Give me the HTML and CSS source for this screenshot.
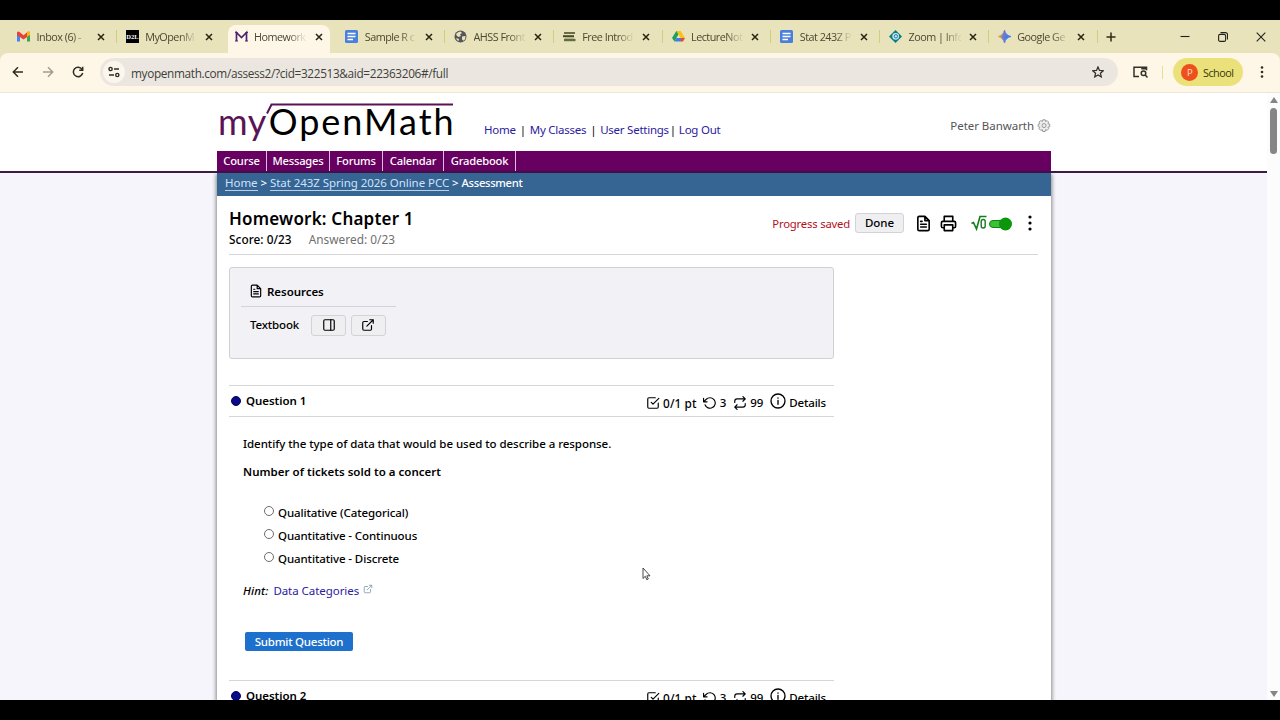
FILE: index.html
```html
<!DOCTYPE html>
<html lang="en">

<head>
    <meta charset="UTF-8">
    <meta name="viewport" content="width=device-width, initial-scale=1.0">
    <title>Homework: Chapter 1</title>
    <link rel="stylesheet" href="styles.css">
</head>

<body>
    <!-- shared icons -->
    <svg class="sprite">
        <symbol id="close" viewBox="0 0 8 8"><path d="M1 1l6 6M7 1L1 7" stroke="currentColor" stroke-width="1.5" fill="none"/></symbol>
        <symbol id="docs" viewBox="0 0 13 13"><rect width="13" height="13" rx="1.5" fill="#4a80dc"/><path d="M2.5 3.5h8M2.5 6.5h8M2.5 9.5h5.5" stroke="#fff" stroke-width="1.4"/></symbol>
        <symbol id="file" viewBox="0 0 24 24"><path d="M14 2H6a2 2 0 0 0-2 2v16a2 2 0 0 0 2 2h12a2 2 0 0 0 2-2V8zM14 2v6h6M16 13H8M16 17H8M10 9H8"/></symbol>
        <symbol id="check" viewBox="0 0 24 24"><path d="M9 11l3 3L22 4M21 12v7a2 2 0 0 1-2 2H5a2 2 0 0 1-2-2V5a2 2 0 0 1 2-2h11"/></symbol>
        <symbol id="undo" viewBox="0 0 24 24"><path d="M1 4v6h6M3.5 15a9 9 0 1 0 2.1-9.4L1 10"/></symbol>
        <symbol id="repeat" viewBox="0 0 24 24"><path d="M17 1l4 4-4 4M3 11V9a4 4 0 0 1 4-4h14M7 23l-4-4 4-4M21 13v2a4 4 0 0 1-4 4H3"/></symbol>
        <symbol id="info" viewBox="0 0 24 24"><circle cx="12" cy="12" r="10.5"/><path d="M12 17v-6M12 7.2v.6"/></symbol>
        <symbol id="external" viewBox="0 0 24 24"><path d="M18 13v6a2 2 0 0 1-2 2H5a2 2 0 0 1-2-2V8a2 2 0 0 1 2-2h6M15 3h6v6M10 14L21 3"/></symbol>
    </svg>

    <div class="browser">
        <div class="tabs">
            <div class="tab">
                <svg class="favicon" viewBox="0 0 13 13"><path d="M0 2.5v9h3V6z" fill="#4285f4"/><path d="M10 6v5.500h3v-9z" fill="#34a853"/><path d="M0 2.500Q1 .8 2.500 2l4 3.200 4-3.200Q12 .8 13 2.500V5L6.500 9.500 0 5z" fill="#e5433a"/><path d="M10 2.300Q12.500.5 13 2.500V5l-3 2z" fill="#f5b90e"/></svg>
                <span>Inbox (6) -</span><svg class="x"><use href="#close"/></svg>
            </div>
            <div class="tab no-line">
                <svg class="favicon" viewBox="0 0 13 13"><rect width="13" height="13" fill="#000"/><text class="d2l" x="0.3" y="9">D2L</text></svg>
                <span>MyOpenM</span><svg class="x"><use href="#close"/></svg>
            </div>
            <div class="tab active">
                <svg class="favicon" viewBox="0 0 13 13"><path d="M1.500 11V2.500l5 5 5-5V11" fill="none" stroke="#4b2470" stroke-width="1.700"/><path d="M0 11h3M10 11h3M0 2.500h2.500M10.500 2.500H13" stroke="#4b2470" stroke-width="1.200"/></svg>
                <span>Homework</span><svg class="x"><use href="#close"/></svg>
            </div>
            <div class="tab">
                <svg class="favicon"><use href="#docs"/></svg>
                <span>Sample R c</span><svg class="x"><use href="#close"/></svg>
            </div>
            <div class="tab">
                <svg class="favicon" viewBox="0 0 13 13"><circle cx="6.500" cy="6.500" r="6" fill="#54565b"/><path d="M2 4q2-2.500 4.500-2.500L8 3 6 4.500 7 6 4.500 7 3 6zM8 6.500l3.500-.5q.5 3-2 4.700L8 9.500zM2 8l3 1-.5 2.200Q2.500 10 2 8z" fill="#e8e3bb"/></svg>
                <span>AHSS Front</span><svg class="x"><use href="#close"/></svg>
            </div>
            <div class="tab">
                <svg class="favicon" viewBox="0 0 13 13"><path d="M1 3h11" stroke="#6b6b45" stroke-width="2"/><path d="M0 6.200h11" stroke="#3d4d2a" stroke-width="2"/><path d="M2 8h9" stroke="#d8a16a" stroke-width="1"/><path d="M1 10h11.500" stroke="#5c7048" stroke-width="2.400"/></svg>
                <span>Free Introd</span><svg class="x"><use href="#close"/></svg>
            </div>
            <div class="tab">
                <svg class="favicon" viewBox="0 0 13 13"><path d="M4.300 1h4.200L4.700 7.500 2.500 11.500 0 8z" fill="#20a15a"/><path d="M4.300 1h4.400L13 8H8.700z" fill="#fbc116"/><path d="M4.500 8h6L8.500 11.500h-6z" fill="#3f7ee8"/><path d="M9 8h4l-2 3.500H8.500z" fill="#e04e35"/></svg>
                <span>LectureNot</span><svg class="x"><use href="#close"/></svg>
            </div>
            <div class="tab">
                <svg class="favicon"><use href="#docs"/></svg>
                <span>Stat 243Z P</span><svg class="x"><use href="#close"/></svg>
            </div>
            <div class="tab">
                <svg class="favicon" viewBox="0 0 13 13"><path d="M6.500 0L13 6.500 6.500 13 0 6.500z" fill="#087d82"/><circle cx="6.700" cy="6.300" r="3.400" fill="#c7e2ee"/><circle cx="6.900" cy="6.300" r="1.700" fill="none" stroke="#237eb0"/></svg>
                <span>Zoom | Info</span><svg class="x"><use href="#close"/></svg>
            </div>
            <div class="tab">
                <svg class="favicon" viewBox="0 0 13 13"><defs><linearGradient id="gem" x1="0" x2="1" y1=".4" y2=".6"><stop offset=".05" stop-color="#e9b52b"/><stop offset=".4" stop-color="#7a79c5"/><stop offset=".7" stop-color="#3b7df0"/></linearGradient></defs><path d="M6.500 0Q7.500 5.500 13 6.500 7.500 7.500 6.500 13 5.500 7.500 0 6.500 5.500 5.500 6.500 0z" fill="url(#gem)" stroke="url(#gem)"/></svg>
                <span>Google Ge</span><svg class="x"><use href="#close"/></svg>
            </div>
            <svg class="new-tab" viewBox="0 0 10 10"><path d="M5 .5v9M.5 5h9" stroke="#2c2b16" stroke-width="1.500"/></svg>
            <div class="window-btns">
                <svg viewBox="0 0 10 10"><path d="M.5 4.500h9" stroke="#222"/></svg>
                <svg viewBox="0 0 10 10"><rect x=".6" y="2.400" width="7" height="7" rx="1.500"/><path d="M2.500 .6H7.500a2 2 0 0 1 2 2V7.500"/></svg>
                <svg viewBox="0 0 10 10"><path d="M.7.7l8.600 8.600M9.300.7L.7 9.300"/></svg>
            </div>
        </div>

        <div class="toolbar">
            <div class="nav-btns">
                <svg viewBox="0 0 12 12"><path d="M11 6H1.500M6 1.300L1.300 6 6 10.700"/></svg>
                <svg class="disabled" viewBox="0 0 12 12"><path d="M1 6h9.500M6 1.300L10.700 6 6 10.700"/></svg>
                <svg viewBox="0 0 12 12"><path d="M10 3.300A4.700 4.700 0 1 0 10.700 7M10.700 .8V4.300H7.200"/></svg>
            </div>
            <div class="address">
                <div class="site-info"><svg viewBox="0 0 12 12"><circle cx="2.600" cy="3" r="1.600"/><path d="M6 3h5M1 9h5"/><circle cx="9.300" cy="9" r="1.600"/></svg></div>
                <span>myopenmath.com/assess2/?cid=322513&amp;aid=22363206#/full</span>
                <svg class="star" viewBox="0 0 12 12"><path d="M6 .9l1.500 3.500 3.800.3-2.900 2.500.9 3.700L6 8.900l-3.300 2 .9-3.700L.7 4.700l3.800-.3z"/></svg>
            </div>
            <svg class="lens" viewBox="0 0 15 12"><path d="M6 10.500H1V1.200h12.500v3M9 1.200v1.500h4.500" /><circle cx="10.500" cy="7.300" r="2.300"/><path d="M12.200 9l2.300 2.500"/></svg>
            <div class="bar-line"></div>
            <div class="profile"><b>P</b><span>School</span></div>
            <svg class="kebab" viewBox="0 0 4 14"><circle cx="2" cy="2.500" r="1.300"/><circle cx="2" cy="7" r="1.300"/><circle cx="2" cy="11.500" r="1.300"/></svg>
        </div>

        <div class="viewport">
            <div class="page">
                <div class="header-wrap">
                    <div class="header">
                        <div class="logo">
                            <span class="my">my</span><span class="open">OpenMath</span>
                            <svg viewBox="0 0 188 12"><path d="M1 10.500L5.500 1.500H187" fill="none" stroke="#5b1358" stroke-width="2"/></svg>
                        </div>
                        <div class="links"><a>Home</a><i>|</i><a>My Classes</a><i>|</i><a>User Settings</a><i class="tight">|</i><a>Log Out</a></div>
                        <div class="user">Peter Banwarth
                            <svg viewBox="0 0 14 14"><path d="M5.800.8h2.400l.4 1.700 1.500-.9 1.600 1.600-.8 1.500 1.900.5v2.500l-1.900.4.8 1.600L10 11.400l-1.500-.8-.4 1.900H5.700l-.4-1.900-1.600.8L2 9.700l.9-1.500L1.200 7.700V5.200l1.700-.4L2 3.200l1.700-1.600 1.600.9z"/><circle cx="7" cy="6.600" r="2"/></svg>
                        </div>
                    </div>
                    <div class="menu"><a>Course</a><a>Messages</a><a>Forums</a><a>Calendar</a><a>Gradebook</a></div>
                </div>

                <div class="content">
                    <div class="breadcrumb"><a class="home">Home</a> &gt; <a class="course">Stat 243Z Spring 2026 Online PCC</a> &gt; <span>Assessment</span></div>
                    <div class="assess-header">
                        <div class="title">
                            <h1>Homework: Chapter 1</h1>
                            <div class="scores"><span class="score">Score: 0/23</span><span class="answered">Answered: 0/23</span></div>
                        </div>
                        <div class="tools">
                            <span class="saved">Progress saved</span>
                            <button class="done">Done</button>
                            <svg class="icon file"><use href="#file"/></svg>
                            <svg class="icon print" viewBox="0 0 24 24"><path d="M6 9V2h12v7M6 18H4a2 2 0 0 1-2-2v-5a2 2 0 0 1 2-2h16a2 2 0 0 1 2 2v5a2 2 0 0 1-2 2h-2M6 14h12v8H6z"/></svg>
                            <svg class="math" viewBox="0 0 42 16"><path d="M.5 8.500l2-1L5.500 14 9 1.500h6.500" fill="none" stroke="#147a1e" stroke-width="1.600"/><rect x="10.200" y="4.500" width="4" height="8.500" rx="2" fill="none" stroke="#147a1e" stroke-width="1.400"/><rect x="18.500" y="5.500" width="16" height="7" rx="3.500" fill="#35c435" stroke="#168016"/><circle cx="34.500" cy="9" r="6.500" fill="#0a970a"/></svg>
                            <svg class="more" viewBox="0 0 4 16"><circle cx="2" cy="2" r="1.600"/><circle cx="2" cy="8" r="1.600"/><circle cx="2" cy="14" r="1.600"/></svg>
                        </div>
                    </div>

                    <div class="resources">
                        <h2><svg class="icon"><use href="#file"/></svg>Resources</h2>
                        <div class="textbook">
                            <span>Textbook</span>
                            <button><svg class="icon" viewBox="0 0 24 24"><rect x="3" y="3" width="18" height="18" rx="2"/><path d="M15 3v18"/></svg></button>
                            <button><svg class="icon"><use href="#external"/></svg></button>
                        </div>
                    </div>

                    <div class="question-head">
                        <span class="dot"></span><span class="q-name">Question 1</span>
                        <div class="q-info">
                            <svg class="icon"><use href="#check"/></svg><span class="pts">0/1 pt</span>
                            <svg class="icon"><use href="#undo"/></svg><span class="tries">3</span>
                            <svg class="icon"><use href="#repeat"/></svg><span class="regens">99</span>
                            <svg class="icon info"><use href="#info"/></svg><span class="details">Details</span>
                        </div>
                    </div>
                    <div class="question">
                        <p class="prompt">Identify the type of data that would be used to describe a response.</p>
                        <p class="subject">Number of tickets sold to a concert</p>
                        <ul>
                            <li><input type="radio" name="q1"><label>Qualitative (Categorical)</label></li>
                            <li><input type="radio" name="q1"><label>Quantitative - Continuous</label></li>
                            <li><input type="radio" name="q1"><label>Quantitative - Discrete</label></li>
                        </ul>
                        <p class="hint"><em>Hint:</em><a>Data Categories</a><svg class="icon"><use href="#external"/></svg></p>
                        <button class="submit">Submit Question</button>
                    </div>
                    <div class="question-head">
                        <span class="dot"></span><span class="q-name">Question 2</span>
                        <div class="q-info">
                            <svg class="icon"><use href="#check"/></svg><span class="pts">0/1 pt</span>
                            <svg class="icon"><use href="#undo"/></svg><span class="tries">3</span>
                            <svg class="icon"><use href="#repeat"/></svg><span class="regens">99</span>
                            <svg class="icon info"><use href="#info"/></svg><span class="details">Details</span>
                        </div>
                    </div>
                </div>
            </div>
            <div class="scrollbar">
                <div class="arrow up"></div>
                <div class="thumb"></div>
                <div class="arrow down"></div>
            </div>
        </div>

        <svg class="cursor" viewBox="0 0 9 14"><path d="M1 1v10.500l2.300-2.200 1.500 3.400 1.500-.7-1.500-3.200H8z" fill="#fff" stroke="#333" stroke-width=".9"/></svg>
    </div>
</body>

</html>
```
FILE: styles.css
```css
* {
    box-sizing: border-box;
}

body {
    margin: 0;
    padding: 20px 0;
    height: 720px;
    background: #000;
    overflow: hidden;
    font-family: "Noto Sans", "Open Sans", sans-serif;
    font-size: 11.5px;
    letter-spacing: -0.05px;
    color: #000;
}

svg {
    display: block;
    flex: none;
}

.sprite {
    display: none;
}

.browser {
    height: 680px;
    overflow: hidden;
    background: #e8e3bb;
    display: flex;
    flex-direction: column;
    position: relative;
}

/* ---- tab strip ---- */
.tabs {
    height: 33px;
    padding-left: 8px;
    display: flex;
    align-items: center;
    flex: none;
}

.tab {
    width: 108.75px;
    height: 33px;
    padding: 0 12px 0 9px;
    display: flex;
    align-items: center;
    position: relative;
    font-family: "Open Sans", sans-serif;
    font-size: 10.8px;
    letter-spacing: -0.5px;
    color: #4a4933;
}

.tab::after {
    content: "";
    position: absolute;
    right: 0;
    top: 10px;
    width: 1px;
    height: 13px;
    background: #cfd07e;
}

.tab.no-line::after,
.tab.active::after {
    display: none;
}

.tab span {
    width: 52px;
    flex: none;
    margin-left: 6.5px;
    margin-right: 14px;
    white-space: nowrap;
    -webkit-mask-image: linear-gradient(90deg, #000 68%, rgba(0, 0, 0, 0.15) 94%);
    mask-image: linear-gradient(90deg, #000 68%, rgba(0, 0, 0, 0.15) 94%);
}

.tab.active {
    height: 28px;
    margin: 5px 6.75px 0 2px;
    padding: 0 0 5px 7px;
    width: 102px;
    background: #fef6e7;
    border-radius: 8px 8px 0 0;
}

.favicon {
    width: 13px;
    height: 13px;
}

.d2l {
    font: bold 6.500px "Liberation Serif", serif;
    letter-spacing: 0;
    fill: #fff;
}

.x {
    width: 8px;
    height: 8px;
    margin-left: -6px;
    color: #26250f;
}

.tab.active .x {
    margin-left: -5px;
}

.new-tab {
    width: 10px;
    height: 10px;
    margin-left: 8px;
}

.window-btns {
    margin-left: auto;
    padding-right: 14px;
    display: flex;
    gap: 28px;
}

.window-btns svg {
    width: 10px;
    height: 10px;
    fill: none;
    stroke: #222;
    stroke-width: 1.1;
}

/* ---- toolbar ---- */
.toolbar {
    height: 40px;
    flex: none;
    padding: 0 16px 1px 12px;
    border-bottom: 1px solid #ece6da;
    border-radius: 8px 8px 0 0;
    background: #fef6e7;
    display: flex;
    align-items: center;
}

.nav-btns {
    display: flex;
    gap: 18px;
}

.nav-btns svg {
    width: 12px;
    height: 12px;
    fill: none;
    stroke: #2f2e22;
    stroke-width: 1.5;
}

.nav-btns svg.disabled {
    stroke: #a19d90;
}

.address {
    width: 1018px;
    height: 28px;
    margin-left: 16px;
    padding: 0 14px 0 3px;
    border-radius: 14px;
    background: #ebe7e0;
    display: flex;
    align-items: center;
    font-family: "Open Sans", sans-serif;
    font-size: 11.8px;
    letter-spacing: -0.34px;
    color: #403f3a;
}

.address span {
    padding-top: 1px;
}

.site-info {
    width: 22px;
    height: 22px;
    border-radius: 50%;
    background: #fbf6ed;
    display: flex;
    align-items: center;
    justify-content: center;
    margin-right: 6px;
}

.site-info svg,
.star {
    width: 12px;
    height: 12px;
    fill: none;
    stroke: #2f2e22;
    stroke-width: 1.4;
}

.star {
    margin-left: auto;
    stroke-width: 1.2;
}

.lens {
    width: 15px;
    height: 12px;
    margin-left: 15px;
    fill: none;
    stroke: #33322a;
    stroke-width: 1.5;
}

.bar-line {
    width: 1px;
    height: 13px;
    margin: 0 10px 0 14px;
    background: #e4e08e;
}

.profile {
    width: 70px;
    height: 28px;
    border-radius: 14px;
    background: #ebe17b;
    display: flex;
    align-items: center;
    padding-left: 8px;
    font-family: "Open Sans", sans-serif;
    font-size: 10.8px;
    letter-spacing: -0.5px;
    color: #37350f;
}

.profile b {
    width: 17px;
    height: 17px;
    margin-right: 5px;
    border-radius: 50%;
    background: #ef4f1d;
    color: #ffe0d0;
    font-size: 9.5px;
    font-weight: normal;
    line-height: 17px;
    text-align: center;
}

.kebab {
    width: 4px;
    height: 14px;
    margin-left: auto;
    fill: #2f2e22;
}

/* ---- web page ---- */
.viewport {
    flex: 1;
    min-height: 0;
    display: flex;
    background: #fff;
}

.page {
    flex: 1;
    overflow: hidden;
    background: #f6f5fc;
}

.header-wrap {
    height: 80px;
    background: #fff;
    border-bottom: 2px solid #3c1c42;
}

.header {
    width: 834px;
    height: 58px;
    margin-left: 217px;
    display: flex;
}

.logo {
    width: 267px;
    height: 58px;
    position: relative;
    padding-left: 1px;
    font-family: Lato, sans-serif;
    font-size: 36px;
    line-height: 57px;
    white-space: nowrap;
}

.logo .my {
    color: #5b1358;
    letter-spacing: 0.5px;
}

.logo .open {
    margin-left: 2px;
    letter-spacing: 2px;
}

.logo svg {
    position: absolute;
    left: 49px;
    top: 10px;
    width: 188px;
    height: 12px;
}

.links {
    padding-top: 28px;
    line-height: 17px;
    letter-spacing: -0.25px;
    display: flex;
}

.links a {
    color: #2a21a0;
}

.links i {
    font-style: normal;
    width: 14px;
    text-align: center;
}

.links .tight {
    width: 10px;
    text-align: left;
    padding-left: 1px;
}

.user {
    margin-left: auto;
    padding-top: 25px;
    line-height: 16px;
    color: #555;
    display: flex;
    gap: 3px;
}

.user svg {
    width: 14px;
    height: 14px;
    margin-top: 1px;
    fill: #eee;
    stroke: #999;
}

.menu {
    width: 834px;
    height: 22px;
    margin-left: 217px;
    background: #670060;
    border-bottom: 2px solid #401048;
    display: flex;
    color: #fff;
    font-size: 11.2px;
    letter-spacing: -0.2px;
    line-height: 20px;
    font-weight: 500;
}

.menu a {
    border-right: 1px solid #d9bfd8;
    text-align: center;
    width: 61px;
    height: 20px;
}

.menu a:nth-child(1) {
    width: 50px;
}

.menu a:nth-child(2) {
    width: 63px;
}

.menu a:nth-child(3) {
    width: 53px;
}

.menu a:nth-child(5) {
    width: 72px;
}

.content {
    width: 834px;
    height: 560px;
    margin-left: 217px;
    background: #fff;
    box-shadow: 0 2px 4px 1px #888;
    clip-path: inset(0 -8px -8px -8px);
}

.breadcrumb {
    height: 23px;
    padding-left: 8px;
    background: #366594;
    color: #fff;
    line-height: 19px;
    font-weight: 500;
}

.breadcrumb span {
    font-size: 11.2px;
    letter-spacing: -0.3px;
}

.breadcrumb a {
    color: #cfe2fb;
    font-weight: 400;
    display: inline-block;
    line-height: 14px;
    border-bottom: 1px solid #b8cfe8;
}

.assess-header {
    width: 809px;
    height: 59px;
    margin-left: 12px;
    padding-top: 11px;
    border-bottom: 1px solid #d6d6d6;
    display: flex;
    justify-content: space-between;
}

h1 {
    margin: 0;
    font-size: 17px;
    letter-spacing: 0.2px;
    line-height: 24px;
    font-weight: 600;
}

.scores {
    font-size: 11.8px;
    line-height: 17px;
    letter-spacing: 0.05px;
    display: flex;
    gap: 17px;
}

.score {
    font-weight: 500;
}

.answered {
    color: #6f6f6f;
}

.tools {
    height: 32px;
    display: flex;
    align-items: center;
    padding-right: 6px;
}

.saved {
    color: #b3101c;
    margin-right: 5px;
    font-size: 11.3px;
    letter-spacing: -0.2px;
}

button {
    font-family: inherit;
    font-size: 11.5px;
    letter-spacing: -0.05px;
    color: #000;
    padding: 0;
    border: 1px solid #d3d3d6;
    border-radius: 3px;
    background: #efeff1;
    display: flex;
    align-items: center;
    justify-content: center;
}

.done {
    width: 49px;
    height: 20px;
    padding-bottom: 1px;
    font-weight: 500;
    margin-right: 11px;
}

.icon {
    width: 14px;
    height: 14px;
    fill: none;
    stroke: currentColor;
    stroke-width: 2;
    stroke-linecap: round;
    stroke-linejoin: round;
}

.tools .icon {
    width: 17px;
    height: 17px;
    stroke-width: 2.3;
}

.tools .print {
    margin: 0 14px 0 8px;
}

.math {
    width: 42px;
    height: 16px;
}

.more {
    width: 4px;
    height: 16px;
    margin-left: 15px;
}

.resources {
    width: 605px;
    height: 92px;
    margin: 12px 0 0 12px;
    padding: 14px 0 0 11px;
    border: 1px solid #d0d0d4;
    border-radius: 3px;
    background: #f2f2f6;
}

.resources h2 {
    width: 155px;
    height: 25px;
    margin: 0;
    padding-left: 8px;
    border-bottom: 1px solid #d3d3d8;
    font-size: 11.5px;
    line-height: 19px;
    font-weight: 600;
    display: flex;
    gap: 4px;
}

.resources h2 svg {
    width: 14px;
    height: 14px;
    margin-top: 2px;
}

.textbook {
    height: 36px;
    padding-left: 9px;
    display: flex;
    align-items: center;
    font-weight: 500;
}

.textbook span {
    width: 61px;
    padding-bottom: 1px;
    letter-spacing: -0.15px;
}

.textbook button {
    width: 35px;
    height: 21px;
    margin-right: 4.500px;
}

.textbook svg {
    width: 14px;
    height: 14px;
}

.question-head {
    width: 605px;
    height: 32px;
    margin: 26px 0 0 12px;
    padding: 0 8px 0 2px;
    border-top: 1px solid #d6d6d6;
    border-bottom: 1px solid #d6d6d6;
    display: flex;
    align-items: center;
}

.dot {
    width: 10px;
    height: 10px;
    border-radius: 50%;
    background: #0a0a8c;
    border: 1px solid #060650;
}

.q-name {
    margin-left: 5px;
    padding-bottom: 1px;
    font-weight: 600;
}

.q-info {
    margin-left: auto;
    padding-top: 3px;
    display: flex;
    align-items: center;
    font-weight: 500;
}

.q-info .info {
    width: 16px;
    height: 16px;
    margin-top: -4px;
}

.q-info span {
    margin: 0 7px 0 3px;
}

.q-info .pts {
    margin-right: 6px;
    font-size: 11.8px;
    letter-spacing: 0.1px;
}

.q-info .details {
    margin-right: 0;
    letter-spacing: -0.15px;
}

.question {
    height: 237px;
    padding: 18px 0 0 26px;
    font-weight: 500;
}

.question p {
    margin: 0;
    line-height: 18px;
}

.question .subject {
    margin-top: 10px;
    font-weight: 600;
    letter-spacing: 0.02px;
}

.question ul {
    list-style: none;
    margin: 20px 0 0;
    padding: 0 0 0 21px;
    letter-spacing: -0.1px;
}

.question li {
    height: 23px;
    display: flex;
    align-items: center;
}

.question input {
    appearance: none;
    width: 10px;
    height: 10px;
    margin: 0 4px 3px 0;
    border: 1px solid #6d6d6d;
    border-radius: 50%;
    background: #fff;
}

.question .hint {
    margin-top: 12px;
    display: flex;
}

.hint em {
    margin-right: 5px;
    letter-spacing: 0.1px;
}

.hint a {
    color: #2a21a0;
    font-weight: 400;
}

.hint .icon {
    width: 10px;
    height: 10px;
    margin: 2px 0 0 4px;
    color: #8298b0;
}

.submit {
    width: 108px;
    height: 19px;
    margin: 32px 0 0 2px;
    border: 0;
    border-radius: 2px;
    background: #1d70cb;
    color: #fff;
    font-weight: 500;
    letter-spacing: -0.25px;
}

/* ---- scrollbar ---- */
.scrollbar {
    width: 13px;
    background: #fcfcfc;
    display: flex;
    flex-direction: column;
    align-items: center;
    padding: 4px 0 3px;
}

.arrow {
    border: 4px solid transparent;
    border-top: 0;
    border-bottom: 6px solid #858585;
}

.arrow.down {
    border-bottom: 0;
    border-top: 6px solid #858585;
    margin-top: auto;
}

.thumb {
    width: 7px;
    height: 46px;
    margin-top: 5px;
    border-radius: 4px;
    background: #858585;
}

.cursor {
    position: absolute;
    left: 642px;
    top: 547px;
    width: 9px;
    height: 14px;
}
```
